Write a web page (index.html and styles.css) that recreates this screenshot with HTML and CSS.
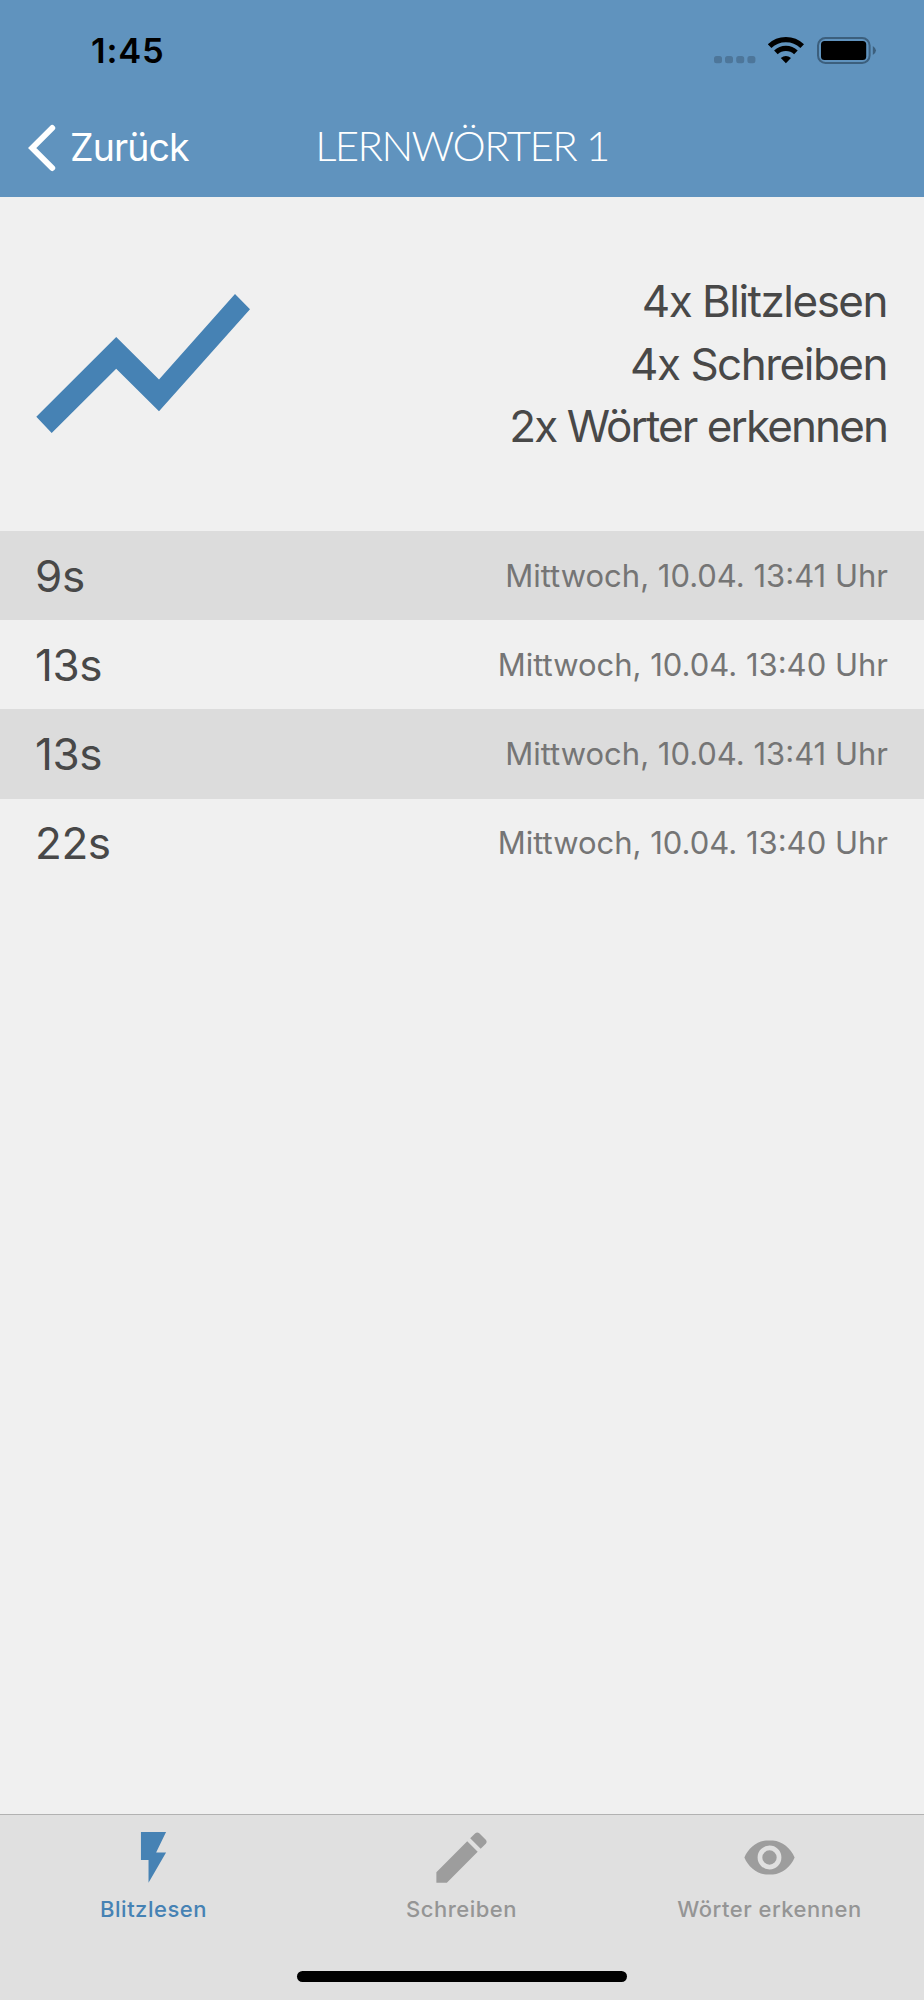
FILE: index.html
```
<!DOCTYPE html>
<html lang="de">

<head>
  <meta charset="UTF-8" />
  <meta name="viewport" content="width=device-width, initial-scale=1.0" />
  <title>Lernwörter 1</title>
  <link rel="stylesheet" href="styles.css">
</head>

<body>
  <div class="app">
    <header class="header">
      <div class="status-bar">
        <span class="time">1:45</span>
        <svg class="status-icons" width="164" height="30" viewBox="0 0 164 30">
          <!-- signal -->
          <g fill="#4d769a">
            <rect x="0" y="20" width="8" height="7.3" rx="2.5" />
            <rect x="11" y="20" width="8" height="7.3" rx="2.5" />
            <rect x="22.2" y="20" width="8" height="7.3" rx="2.5" />
            <rect x="33.4" y="20" width="8" height="7.3" rx="2.5" />
          </g>
          <!-- wifi -->
          <g fill="none" stroke="#000" stroke-width="5.2">
            <path d="M55.6 10.2A23.5 23.5 0 0 1 88.2 10.2" />
            <path d="M61.9 16.4A14.4 14.4 0 0 1 81.9 16.4" />
          </g>
          <path d="M71.9 27.3L66.8 22.1Q71.9 17.7 77 22.1Z" />
          <!-- battery -->
          <rect x="104" y="2" width="51.6" height="25" rx="7.5" fill="none" stroke="#3c5f7d" stroke-width="2" />
          <rect x="107" y="5" width="45.2" height="19" rx="3.5" />
          <path d="M158.8 10Q165.2 14.5 158.8 19Z" fill="#3c5f7d" />
        </svg>
      </div>
      <div class="nav-bar">
        <a class="back" href="#">
          <svg width="28" height="48" viewBox="0 0 28 48">
            <path d="M24.2 4L4.2 24L24.2 44" fill="none" stroke="#fff" stroke-width="6" stroke-linecap="round" />
          </svg>
          <span>Zurück</span>
        </a>
        <h1 class="title">LERNWÖRTER 1</h1>
      </div>
    </header>

    <main class="content">
      <section class="summary">
        <svg width="214" height="140" viewBox="0 0 214 140">
          <path d="M.3 122.7L80.2 43L123 85.4L199 0L214 15.2L123 117.3L80.2 74.7L15.7 139Z" fill="#4682b4" />
        </svg>
        <div class="summary-text">
          <div>4x Blitzlesen</div>
          <div>4x Schreiben</div>
          <div class="long">2x Wörter erkennen</div>
        </div>
      </section>

      <ul class="results">
        <li><span class="seconds">9s</span><span class="date">Mittwoch, 10.04. 13:41 Uhr</span></li>
        <li><span class="seconds">13s</span><span class="date">Mittwoch, 10.04. 13:40 Uhr</span></li>
        <li><span class="seconds">13s</span><span class="date">Mittwoch, 10.04. 13:41 Uhr</span></li>
        <li><span class="seconds">22s</span><span class="date">Mittwoch, 10.04. 13:40 Uhr</span></li>
      </ul>
    </main>

    <footer class="footer">
      <nav class="tabs">
        <a class="tab active" href="#">
          <svg width="67" height="67" viewBox="0 0 512 512">
            <path d="M160 62v214h58v172l134-230h-76l76-156z" />
          </svg>
          <span>Blitzlesen</span>
        </a>
        <a class="tab" href="#">
          <svg width="67" height="67" viewBox="0 0 512 512">
            <path d="M64 368v80h80l235.700-235.700-80-80L64 368zM441.600 150.500c8.500-8.500 8.500-21.700 0-30.200l-49.900-49.900c-8.500-8.500-21.700-8.500-30.200 0L322.400 109.500l80 80 39.200-39z" />
          </svg>
          <span>Schreiben</span>
        </a>
        <a class="tab" href="#">
          <svg width="67" height="67" viewBox="0 0 512 512">
            <path fill-rule="evenodd" d="M230 126h52c72 6 136 58 166 130c-30 72-94 124-166 130h-52c-72-6-136-58-166-130c30-72 94-124 166-130zM256 165a91 91 0 1 0 0 182a91 91 0 1 0 0-182zM256 201a55 55 0 1 1 0 110a55 55 0 1 1 0-110z" />
          </svg>
          <span>Wörter erkennen</span>
        </a>
      </nav>
      <div class="home-indicator"></div>
    </footer>
  </div>
</body>

</html>
```
FILE: styles.css
```
* {
  box-sizing: border-box;
}

body {
  margin: 0;
  font-family: Inter, "Liberation Sans", sans-serif;
  background-color: #f0f0f0;
  color: #484848;
}

svg {
  display: block;
  flex-shrink: 0;
}

a {
  color: inherit;
  text-decoration: none;
}

.app {
  display: flex;
  flex-direction: column;
  height: 2000px;
}

.header {
  height: 197px;
  background-color: #6093be;
}

.status-bar {
  display: flex;
  justify-content: space-between;
  height: 98px;
  padding: 36px 46px 0 91px;
}

.time {
  font-size: 34.5px;
  line-height: 30px;
  font-weight: 600;
  letter-spacing: 0.8px;
  color: #000;
}

.nav-bar {
  display: grid;
  grid-template-columns: 1fr auto 1fr;
  align-items: center;
  height: 99px;
  padding: 0 28px;
  color: #fff;
}

.back {
  display: flex;
  align-items: center;
  gap: 14px;
  font-size: 37.5px;
  letter-spacing: -0.9px;
}

.title {
  margin: 0;
  padding-bottom: 6px;
  font-family: Lato, sans-serif;
  font-size: 42px;
  line-height: 50px;
  font-weight: 300;
  letter-spacing: -1.6px;
}

.content {
  flex: 1;
}

.summary {
  display: flex;
  justify-content: space-between;
  align-items: center;
  height: 334px;
  padding: 0 37px 0 36px;
}

.summary-text {
  font-size: 44px;
  line-height: 62.5px;
  letter-spacing: -1.5px;
  text-align: right;
}

.summary-text .long {
  letter-spacing: -1.9px;
}

.results {
  margin: 0;
  padding: 0;
  list-style: none;
}

.results li {
  display: flex;
  justify-content: space-between;
  align-items: center;
  height: 89.2px;
  padding: 0 36px 0 35px;
}

.results li:nth-child(odd) {
  background-color: #dcdcdc;
}

.seconds {
  font-size: 44px;
  line-height: 54px;
  letter-spacing: -0.4px;
}

.date {
  font-size: 31px;
  line-height: 38px;
  color: #757575;
}

.footer {
  height: 186px;
  border-top: 1px solid #b2b2b2;
  background-color: #e0e0e0;
}

.tabs {
  display: grid;
  grid-template-columns: repeat(3, 1fr);
  height: 156px;
}

.tab {
  display: flex;
  flex-direction: column;
  align-items: center;
  padding: 9px 1px 0 0;
  font-size: 22px;
  line-height: 36px;
  font-weight: 500;
  letter-spacing: 0.5px;
  color: #959595;
}

.tab svg {
  fill: #9d9d9d;
}

.tab.active,
.tab.active svg {
  color: #4682b4;
  fill: #4682b4;
}

.home-indicator {
  width: 330px;
  height: 11px;
  margin: 0 auto;
  border-radius: 6px;
  background-color: #000;
}
```
